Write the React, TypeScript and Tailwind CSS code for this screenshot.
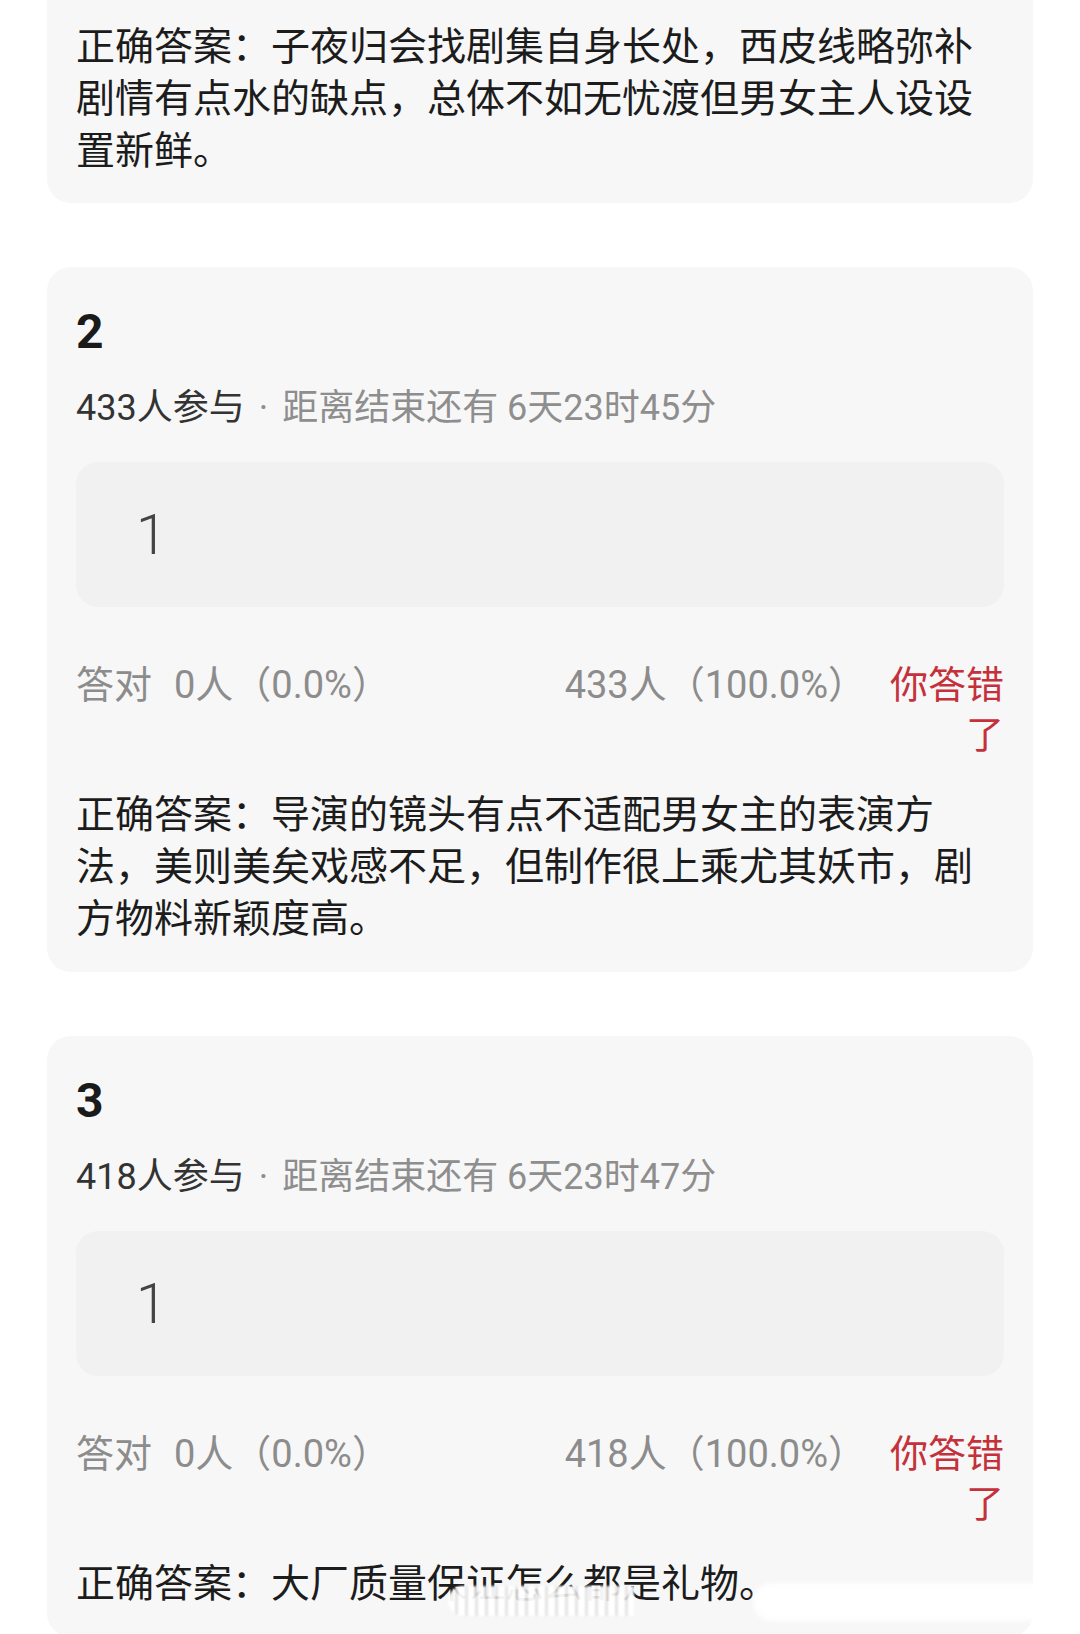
import React from "react";

type Quiz = {
  no: number;
  joined: number;
  remain: string;
  answer: string;
};

const quizzes: Quiz[] = [
  {
    no: 2,
    joined: 433,
    remain: "6天23时45分",
    answer:
      "导演的镜头有点不适配男女主的表演方法，美则美矣戏感不足，但制作很上乘尤其妖市，剧方物料新颖度高。",
  },
  {
    no: 3,
    joined: 418,
    remain: "6天23时47分",
    answer: "大厂质量保证怎么都是礼物。",
  },
];

const Answer = ({ text }: { text: string }) => (
  <p className="text-[39px] leading-[52px] text-[#1c1c1c]">{`正确答案：${text}`}</p>
);

const QuizCard = ({ quiz }: { quiz: Quiz }) => (
  <div className="mt-[64px] rounded-[24px] bg-[#f7f7f7] px-[29px] pt-[36px] pb-[27px]">
    {/* question number */}
    <div className="text-[48px] font-bold leading-[58px] text-[#1a1a1a]">{quiz.no}</div>

    {/* participants + countdown */}
    <div className="mt-[22px] flex items-center text-[36px] leading-[50px]">
      <span className="text-[#333333]">{quiz.joined}人参与</span>
      <span className="mx-[14px] text-[#8e8e8e]">·</span>
      <span className="text-[#8e8e8e]">距离结束还有 {quiz.remain}</span>
    </div>

    {/* chosen option */}
    <div className="mt-[29px] flex h-[145px] items-center rounded-[22px] bg-[#f1f1f1] pl-[60px] text-[56px] font-light text-[#444444]">
      1
    </div>

    {/* result stats */}
    <div className="mt-[53px] flex items-start text-[38px] leading-[50px] text-[#8c8c8c]">
      <span className="flex-1">
        答对<span className="ml-[22px]">0人（0.0%）</span>
      </span>
      <span>{quiz.joined}人（100.0%）</span>
      <span className="ml-[22px] w-[116px] text-right text-[#c4313b]">你答错了</span>
    </div>

    <div className="mt-[29px]">
      <Answer text={quiz.answer} />
    </div>
  </div>
);

export default function App() {
  return (
    <div className="relative min-h-screen overflow-hidden bg-white px-[47px] font-['Roboto','Noto_Sans_CJK_SC',sans-serif]">
      {/* tail of the previous card, scrolled past the top */}
      <div className="rounded-b-[24px] bg-[#f7f7f7] px-[29px] pt-[21px] pb-[26px]">
        <Answer text="子夜归会找剧集自身长处，西皮线略弥补剧情有点水的缺点，总体不如无忧渡但男女主人设设置新鲜。" />
      </div>

      {quizzes.map((q) => (
        <QuizCard key={q.no} quiz={q} />
      ))}

      {/* faded watermark over the last line */}
      <div className="absolute left-[448px] top-[1586px] h-[30px] w-[186px] rounded-l-full bg-[repeating-linear-gradient(90deg,rgba(255,255,255,0.95)_0_7px,rgba(225,225,225,0.85)_7px_10px)] blur-[1px]" />
      <div className="absolute left-[753px] top-[1583px] h-[38px] w-[315px] rounded-full bg-white/90 blur-[2px]" />
    </div>
  );
}
